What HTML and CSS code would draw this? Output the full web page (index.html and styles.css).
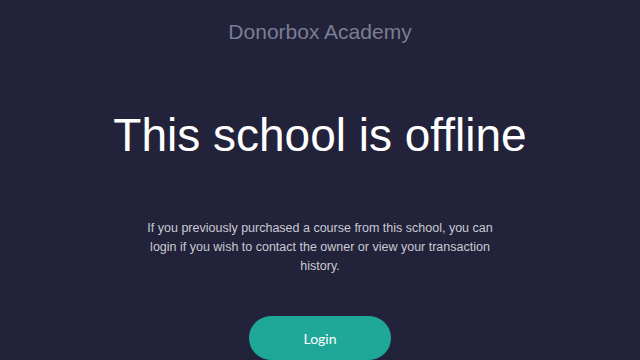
FILE: index.html
```html
<!DOCTYPE html>
<html lang="en">
<head>
<meta charset="utf-8">
<title>Donorbox Academy</title>
<link rel="stylesheet" href="styles.css">
</head>
<body>
<main class="page">
  <div class="brand">Donorbox Academy</div>
  <h1 class="title">This school is offline</h1>
  <p class="desc">If you previously purchased a course from this school, you can login if you wish to contact the owner or view your transaction history.</p>
  <a class="btn" href="#">Login</a>
</main>
</body>
</html>
```
FILE: styles.css
```css
html, body {
  margin: 0;
  padding: 0;
  height: 100%;
  background: #22233a;
  overflow: hidden;
}
.page {
  display: flex;
  flex-direction: column;
  align-items: center;
  font-family: "Liberation Sans", Arial, sans-serif;
  padding-top: 19px;
}
.brand {
  color: #7b7d92;
  font-size: 21px;
  line-height: 26px;
}
.title {
  margin: 64px 0 0;
  color: #ffffff;
  font-weight: 400;
  font-size: 46px;
  line-height: 52px;
}
.desc {
  margin: 58px 0 0;
  width: 370px;
  text-align: center;
  color: #c9cad3;
  font-size: 12.5px;
  line-height: 19px;
}
.btn {
  margin-top: 40px;
  width: 142px;
  height: 44px;
  border-radius: 22px;
  background: #1fa898;
  color: #ffffff;
  font-family: Lato, "Open Sans", sans-serif;
  font-size: 14px;
  display: flex;
  align-items: center;
  justify-content: center;
  text-decoration: none;
}
```
